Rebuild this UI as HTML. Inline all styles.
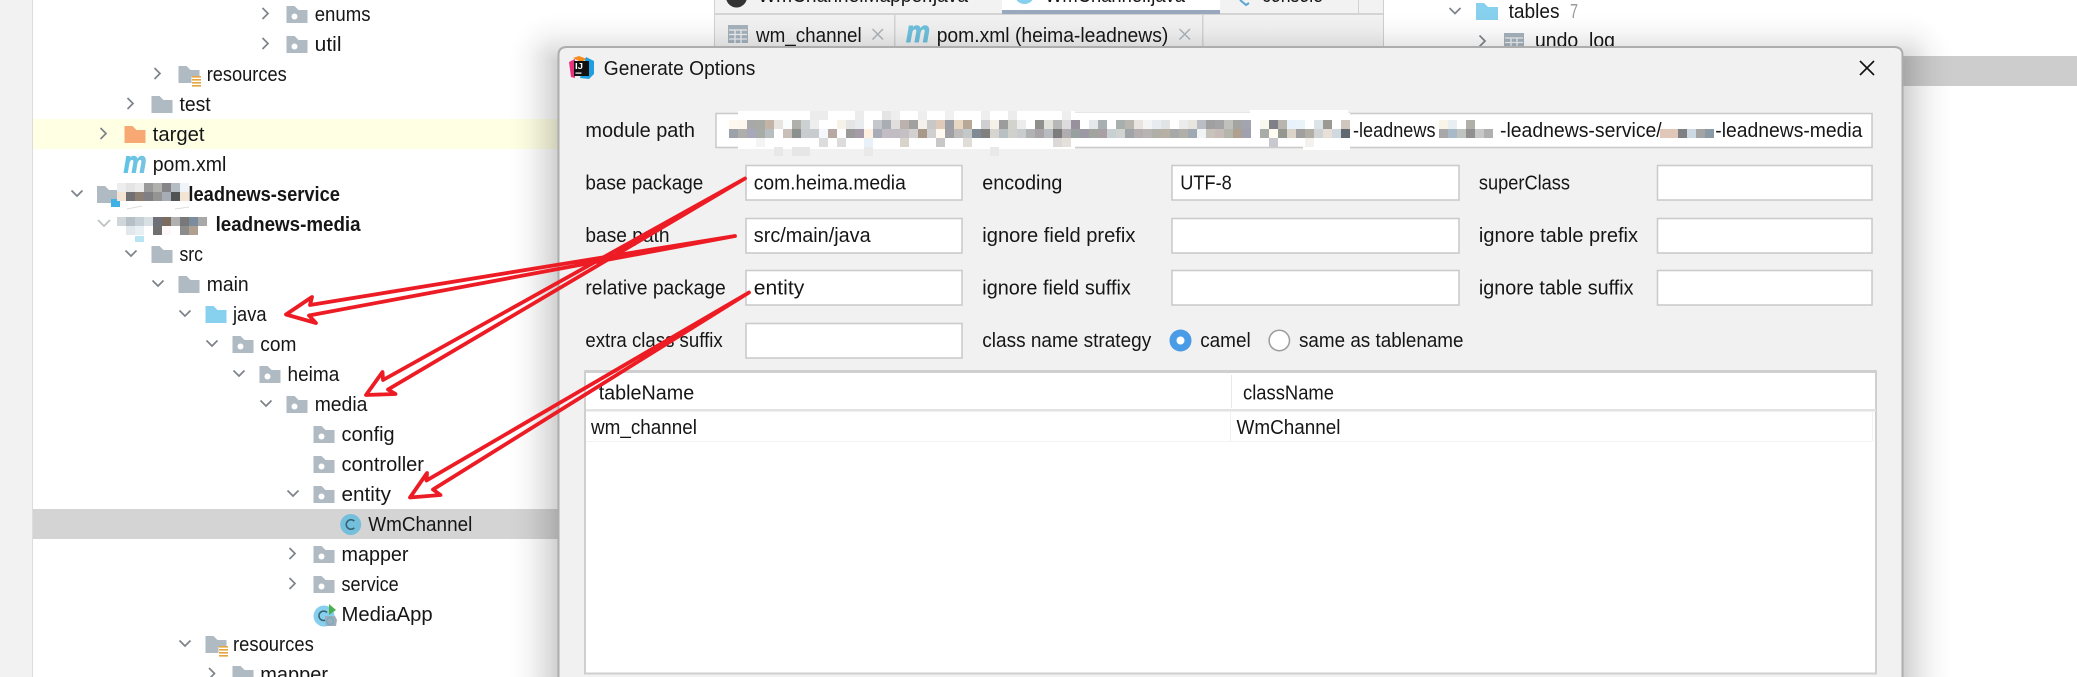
<!DOCTYPE html>
<html><head><meta charset="utf-8"><title>Generate Options</title>
<style>
html,body{margin:0;padding:0;background:#fff;width:2077px;height:677px;overflow:hidden}
svg{display:block}
text{font-family:"Liberation Sans",sans-serif;font-size:20px;fill:#161616}
.b{font-weight:bold}
.m rect{width:9px;height:9px}
.ch{fill:none;stroke:#7d8389;stroke-width:1.7}
.in{fill:#fff;stroke:#cbcbcb;stroke-width:1.6}
</style></head><body>
<svg xmlns="http://www.w3.org/2000/svg" width="2077" height="677" viewBox="0 0 2077 677">
<defs>
<path id="f" d="M0 0h8l4 4h9v13H0z" fill="#afbac2"/>
<g id="p"><path d="M0 0h8l4 4h9v13H0z" fill="#afbac2"/><circle cx="8" cy="10.500" r="3" fill="#fff"/></g>
<g id="r"><path d="M0 0h8l4 4h9v7h-8v6H0z" fill="#afbac2"/><path d="M13.500 10h9v1.600h-9zM13.500 13h9v1.600h-9zM13.500 16h9v1.600h-9zM13.500 19h9v1.600h-9z" fill="#e5a63f"/></g>
<path id="d" d="M-5.500-3L0 2.500L5.500-3" class="ch"/>
<path id="n" d="M-2.500-5.500L3 0L-2.500 5.500" class="ch"/>
<g id="t"><rect width="20" height="18" fill="#a6b3bd"/><path d="M1 5h18M1 9.500h18M1 14h18M7 5v13M13 5v13" stroke="#eef1f3" stroke-width="1.300" fill="none"/></g>
<linearGradient id="gr" x1="0" y1="0" x2="1" y2="0">
<stop offset="0" stop-color="#000" stop-opacity=".19"/><stop offset=".1" stop-color="#000" stop-opacity=".155"/><stop offset=".2" stop-color="#000" stop-opacity=".125"/><stop offset=".3" stop-color="#000" stop-opacity=".1"/><stop offset=".4" stop-color="#000" stop-opacity=".077"/><stop offset=".5" stop-color="#000" stop-opacity=".055"/><stop offset=".6" stop-color="#000" stop-opacity=".035"/><stop offset=".7" stop-color="#000" stop-opacity=".024"/><stop offset=".8" stop-color="#000" stop-opacity=".014"/><stop offset=".9" stop-color="#000" stop-opacity=".006"/><stop offset="1" stop-color="#000" stop-opacity="0"/>
</linearGradient>
<linearGradient id="gl" href="#gr" x1="1" y1="0" x2="0" y2="0"/>
<linearGradient id="gt" href="#gr" x1="0" y1="1" x2="0" y2="0"/>
<radialGradient id="c1" href="#gr" gradientUnits="userSpaceOnUse" cx="558" cy="62" r="50" fx="558" fy="62"/>
<radialGradient id="c2" href="#gr" gradientUnits="userSpaceOnUse" cx="1903" cy="62" r="50" fx="1903" fy="62"/>
<linearGradient id="mg" x1="0" y1="0" x2="1" y2="0"><stop offset="0" stop-color="#59c4e8"/><stop offset="1" stop-color="#7fc3dd"/></linearGradient>
</defs>

<!-- base -->
<rect width="2077" height="677" fill="#fff"/>
<rect width="32" height="677" fill="#f2f2f2"/><rect x="32" width="1" height="677" fill="#dcdcdc"/>
<rect x="33" y="119" width="540" height="30" fill="#ffffe4"/>
<rect x="33" y="509" width="540" height="30" fill="#d4d4d4"/>
<rect x="1890" y="56" width="187" height="30" fill="#cdcdcd"/>

<!-- tree -->
<use href="#n" x="265" y="13.500"/><use href="#p" x="286.500" y="6"/><text x="314.700" y="21" textLength="55.800" lengthAdjust="spacingAndGlyphs">enums</text>
<use href="#n" x="265" y="43.500"/><use href="#p" x="286.500" y="36"/><text x="314.700" y="51" textLength="26.800" lengthAdjust="spacingAndGlyphs">util</text>
<use href="#n" x="157" y="73.500"/><use href="#r" x="178.500" y="66"/><text x="206.700" y="81" textLength="80" lengthAdjust="spacingAndGlyphs">resources</text>
<use href="#n" x="130" y="103.500"/><use href="#f" x="151.500" y="96"/><text x="179.500" y="111" textLength="31.200" lengthAdjust="spacingAndGlyphs">test</text>
<use href="#n" x="103" y="133.500"/><path d="M124.500 126h8l4 4h9v13h-21z" fill="#f8a872"/><text x="152.700" y="141" textLength="51.800" lengthAdjust="spacingAndGlyphs">target</text>
<text x="123.500" y="172.500" textLength="23" lengthAdjust="spacingAndGlyphs" class="b" font-style="italic" style="font-size:31px;fill:url(#mg);stroke:#6cc3e4;stroke-width:.9">m</text><text x="152.700" y="171" textLength="73.600" lengthAdjust="spacingAndGlyphs">pom.xml</text>
<use href="#d" x="77" y="193.500"/><path d="M97 186h8l4 4h9v13H97z" fill="#afbac2"/><rect x="111" y="199" width="9" height="8" fill="#3eb2e4"/>
<text x="188.400" y="201" textLength="151.600" lengthAdjust="spacingAndGlyphs" class="b">leadnews-service</text>
<text x="215.600" y="231" textLength="145" lengthAdjust="spacingAndGlyphs" class="b">leadnews-media</text>
<use href="#d" x="131" y="253.500"/><use href="#f" x="151.500" y="246"/><text x="179.500" y="261" textLength="23.500" lengthAdjust="spacingAndGlyphs">src</text>
<use href="#d" x="158" y="283.500"/><use href="#f" x="178.500" y="276"/><text x="206.700" y="291" textLength="42" lengthAdjust="spacingAndGlyphs">main</text>
<use href="#d" x="185" y="313.500"/><path d="M205.500 306h8l4 4h9v13h-21z" fill="#87d0ee"/><text x="233" y="321" textLength="33.500" lengthAdjust="spacingAndGlyphs">java</text>
<use href="#d" x="212" y="343.500"/><use href="#p" x="232.500" y="336"/><text x="260.300" y="351" textLength="36.100" lengthAdjust="spacingAndGlyphs">com</text>
<use href="#d" x="239" y="373.500"/><use href="#p" x="259.500" y="366"/><text x="287.500" y="381" textLength="51.800" lengthAdjust="spacingAndGlyphs">heima</text>
<use href="#d" x="266" y="403.500"/><use href="#p" x="286.500" y="396"/><text x="314.700" y="411" textLength="52.700" lengthAdjust="spacingAndGlyphs">media</text>
<use href="#p" x="313.500" y="426"/><text x="341.500" y="441" textLength="53.100" lengthAdjust="spacingAndGlyphs">config</text>
<use href="#p" x="313.500" y="456"/><text x="341.500" y="471" textLength="82.500" lengthAdjust="spacingAndGlyphs">controller</text>
<use href="#d" x="293" y="493.500"/><use href="#p" x="313.500" y="486"/><text x="341.500" y="501" textLength="49.500" lengthAdjust="spacingAndGlyphs">entity</text>
<circle cx="350.700" cy="524.500" r="10.500" fill="#74bfdc"/><path d="M354.300 521.200a4.700 4.700 0 1 0 0 6.600" fill="none" stroke="#35606f" stroke-width="1.500"/><text x="368.300" y="531" textLength="104" lengthAdjust="spacingAndGlyphs">WmChannel</text>
<use href="#n" x="292" y="553.500"/><use href="#p" x="313.500" y="546"/><text x="341.500" y="561" textLength="67" lengthAdjust="spacingAndGlyphs">mapper</text>
<use href="#n" x="292" y="583.500"/><use href="#p" x="313.500" y="576"/><text x="341.500" y="591" textLength="57.200" lengthAdjust="spacingAndGlyphs">service</text>
<circle cx="324" cy="616" r="10.500" fill="#87cfee"/><path d="M327 612.500a4.700 4.700 0 1 0 0 6.600" fill="none" stroke="#35606f" stroke-width="1.500"/><path d="M329 604l7 6-7 5z" fill="#4cb050"/><path d="M325 616h10l2 4-1 6h-10l-1-6z" fill="#a0adb6"/><circle cx="330" cy="621" r="3.500" fill="none" stroke="#6aaed0" stroke-width="1.200"/>
<text x="341.500" y="621" textLength="91.100" lengthAdjust="spacingAndGlyphs">MediaApp</text>
<use href="#d" x="185" y="643.500"/><use href="#r" x="205.500" y="636"/><text x="233" y="651" textLength="80.800" lengthAdjust="spacingAndGlyphs">resources</text>
<use href="#n" x="211.500" y="673.500"/><use href="#f" x="232.500" y="666"/><text x="260.300" y="681" textLength="67.700" lengthAdjust="spacingAndGlyphs">mapper</text>

<!-- tree mosaics -->
<g class="m" shape-rendering="crispEdges">
<rect x="117" y="183" fill="#ededed"/><rect x="126" y="183" fill="#e4e4e4"/><rect x="135" y="183" fill="#ececec"/><rect x="144" y="183" fill="#9a9a9a"/><rect x="153" y="183" fill="#b0b0ae"/><rect x="162" y="183" fill="#858589"/><rect x="171" y="183" fill="#b4bcc4"/><rect x="180" y="183" fill="#f0f4f8"/>
<rect x="117" y="192" fill="#f4e4d4"/><rect x="126" y="192" fill="#707072"/><rect x="135" y="192" fill="#8c8074"/><rect x="144" y="192" fill="#808084"/><rect x="153" y="192" fill="#949492"/><rect x="162" y="192" fill="#a8acb4"/><rect x="171" y="192" fill="#505454"/><rect x="180" y="192" fill="#f4e4d4"/>
<rect x="117" y="217" fill="#d0d6da"/><rect x="126" y="217" fill="#b4c0c6"/><rect x="135" y="217" fill="#c4d0d6"/><rect x="144" y="217" fill="#d8e0e4"/><rect x="153" y="217" fill="#70707a"/><rect x="162" y="217" fill="#7c6c60"/><rect x="171" y="217" fill="#b0b0b0"/><rect x="180" y="217" fill="#787878"/><rect x="189" y="217" fill="#7a8c9e"/><rect x="198" y="217" fill="#a8a8a8"/>
<rect x="126" y="226" fill="#e0e8ec"/><rect x="135" y="226" fill="#e8f0f4"/><rect x="153" y="226" fill="#707070"/><rect x="162" y="226" fill="#fef8f8"/><rect x="180" y="226" fill="#8c8c8c"/><rect x="189" y="226" fill="#b0a090"/>
<rect x="135" y="236" style="height:6px" fill="#b8e4f4"/>
</g>
<path d="M98 220l6 6 6-6" class="ch" opacity=".5"/>
<path d="M127 209l15-3M175 209l14-2" stroke="#ddd" stroke-width="1" fill="none"/>

<!-- tab strip -->
<rect x="714" y="0" width="669" height="46" fill="#f2f2f2"/>
<rect x="714" y="0" width="1" height="46" fill="#d2d2d2"/>
<rect x="1383" y="0" width="1" height="46" fill="#cfcfcf"/>
<rect x="714" y="13" width="669" height="2" fill="#d4d4d4"/>
<rect x="1002" y="0" width="218" height="10" fill="#fff"/>
<rect x="1002" y="10" width="218" height="4" fill="#9aa8bd"/>
<rect x="1358" y="0" width="1" height="13" fill="#d2d2d2"/>
<circle cx="736.500" cy="-3" r="10.500" fill="#333"/>
<text x="758" y="2" textLength="210" lengthAdjust="spacingAndGlyphs">WmChannelMapper.java</text>
<circle cx="1024.500" cy="-6" r="10" fill="#87cfee"/>
<text x="1045" y="2" textLength="140" lengthAdjust="spacingAndGlyphs">WmChannel.java</text>
<path d="M1240 0l6 5 3-2" stroke="#5ba4d8" stroke-width="2" fill="none"/>
<text x="1262" y="2" textLength="61" lengthAdjust="spacingAndGlyphs">console</text>
<rect x="894" y="15" width="1.500" height="31" fill="#d4d4d4"/><rect x="1202" y="15" width="1.500" height="31" fill="#d4d4d4"/>
<use href="#t" x="728" y="25"/>
<text x="756" y="42" textLength="105.700" lengthAdjust="spacingAndGlyphs">wm_channel</text>
<path d="M872.500 29l10.500 10.500M883 29l-10.500 10.500" stroke="#adb4b9" stroke-width="1.500"/>
<text x="906" y="42" textLength="24" lengthAdjust="spacingAndGlyphs" class="b" font-style="italic" style="font-size:31px;fill:#6fc1de;stroke:#6fc1de;stroke-width:.9">m</text>
<text x="936.700" y="42" textLength="231.600" lengthAdjust="spacingAndGlyphs">pom.xml (heima-leadnews)</text>
<path d="M1179.500 29l10.500 10.500M1190 29l-10.500 10.500" stroke="#adb4b9" stroke-width="1.500"/>

<!-- right tree -->
<use href="#d" x="1455" y="11"/><path d="M1476 3h8l4 4h10v13h-22z" fill="#87d0ee"/>
<text x="1508.600" y="18" textLength="51" lengthAdjust="spacingAndGlyphs">tables</text>
<text x="1570" y="18" textLength="8" lengthAdjust="spacingAndGlyphs" style="fill:#9a9a9a">7</text>
<use href="#n" x="1482" y="41"/><use href="#t" x="1504" y="33"/>
<text x="1535" y="47" textLength="80" lengthAdjust="spacingAndGlyphs">undo_log</text>

<!-- shadow -->
<rect x="508" y="62" width="50" height="615" fill="url(#gl)"/>
<rect x="1903" y="62" width="50" height="615" fill="url(#gr)"/>
<rect x="558" y="12" width="1345" height="50" fill="url(#gt)"/>
<rect x="508" y="12" width="50" height="50" fill="url(#c1)"/>
<rect x="1903" y="12" width="50" height="50" fill="url(#c2)"/>

<!-- dialog -->
<path d="M558.500 680V55Q558.500 47 567 47H1894Q1902.500 47 1902.500 55V680Z" fill="#f1f1f1" stroke="#adadad" stroke-width="2"/>
<!-- IJ logo -->
<path d="M569 62l6-3v19l-4-1z" fill="#e8327c"/><path d="M573 58l6-2 8 3-6 3z" fill="#f68b1f"/><path d="M586 57l8 4v13l-5 5-9-1z" fill="#1d9fe0"/>
<rect x="574" y="61" width="15" height="15" fill="#111"/>
<text x="575" y="69" textLength="8" lengthAdjust="spacingAndGlyphs" class="b" style="font-size:8px;fill:#fff">IJ</text>
<rect x="575.500" y="72.500" width="6" height="1.200" fill="#fff"/>
<text x="603.800" y="75" textLength="151.500" lengthAdjust="spacingAndGlyphs">Generate Options</text>
<path d="M1860 61l14 14M1874 61l-14 14" stroke="#111" stroke-width="1.600"/>

<!-- labels -->
<text x="585.400" y="137" textLength="109.600" lengthAdjust="spacingAndGlyphs">module path</text>
<text x="585.400" y="189.500" textLength="117.900" lengthAdjust="spacingAndGlyphs">base package</text>
<text x="585.400" y="242" textLength="84.200" lengthAdjust="spacingAndGlyphs">base path</text>
<text x="585.400" y="294.500" textLength="140.300" lengthAdjust="spacingAndGlyphs">relative package</text>
<text x="585.400" y="347" textLength="137.300" lengthAdjust="spacingAndGlyphs">extra class suffix</text>
<text x="982.300" y="189.500" textLength="80.100" lengthAdjust="spacingAndGlyphs">encoding</text>
<text x="982.300" y="242" textLength="153.100" lengthAdjust="spacingAndGlyphs">ignore field prefix</text>
<text x="982.300" y="294.500" textLength="148.500" lengthAdjust="spacingAndGlyphs">ignore field suffix</text>
<text x="982.300" y="347" textLength="168.900" lengthAdjust="spacingAndGlyphs">class name strategy</text>
<text x="1478.900" y="189.500" textLength="91.100" lengthAdjust="spacingAndGlyphs">superClass</text>
<text x="1478.900" y="242" textLength="159.100" lengthAdjust="spacingAndGlyphs">ignore table prefix</text>
<text x="1478.900" y="294.500" textLength="154.600" lengthAdjust="spacingAndGlyphs">ignore table suffix</text>

<!-- inputs -->
<rect class="in" x="716" y="113.500" width="1156" height="34"/>
<rect class="in" x="746" y="165.500" width="216" height="34.500"/>
<rect class="in" x="746" y="218.500" width="216" height="34.500"/>
<rect class="in" x="746" y="270.500" width="216" height="34.500"/>
<rect class="in" x="746" y="323.500" width="216" height="34.500"/>
<rect class="in" x="1172" y="165.500" width="287" height="34.500"/>
<rect class="in" x="1172" y="218.500" width="287" height="34.500"/>
<rect class="in" x="1172" y="270.500" width="287" height="34.500"/>
<rect class="in" x="1657.500" y="165.500" width="214.500" height="34.500"/>
<rect class="in" x="1657.500" y="218.500" width="214.500" height="34.500"/>
<rect class="in" x="1657.500" y="270.500" width="214.500" height="34.500"/>
<text x="753.800" y="189.500" textLength="152" lengthAdjust="spacingAndGlyphs">com.heima.media</text>
<text x="753.800" y="242" textLength="116.800" lengthAdjust="spacingAndGlyphs">src/main/java</text>
<text x="753.800" y="294.500" textLength="50.500" lengthAdjust="spacingAndGlyphs">entity</text>
<text x="1180.300" y="189.500" textLength="51.500" lengthAdjust="spacingAndGlyphs">UTF-8</text>

<!-- radios -->
<circle cx="1180.500" cy="340.500" r="11" fill="#4a9ce6"/><circle cx="1180.500" cy="340.500" r="4" fill="#fff"/>
<text x="1200.200" y="347" textLength="50.500" lengthAdjust="spacingAndGlyphs">camel</text>
<circle cx="1279.300" cy="340.500" r="10.200" fill="#fff" stroke="#9c9c9c" stroke-width="1.500"/>
<text x="1299" y="347" textLength="164.500" lengthAdjust="spacingAndGlyphs">same as tablename</text>

<!-- module path text -->
<text x="1353" y="137" textLength="82.500" lengthAdjust="spacingAndGlyphs">-leadnews</text>
<text x="1500" y="137" textLength="161.700" lengthAdjust="spacingAndGlyphs">-leadnews-service/</text>
<text x="1715.300" y="137" textLength="147.100" lengthAdjust="spacingAndGlyphs">-leadnews-media</text>

<!-- mosaic haze -->
<rect x="738" y="111" width="337" height="38" fill="#fff"/>
<rect x="1075" y="113" width="275" height="26" fill="#fff"/>
<rect x="1250" y="110" width="98" height="5" fill="#fff"/>
<rect x="1303" y="139" width="47" height="11" fill="#fff"/>
<g class="m" shape-rendering="crispEdges">
<rect x="810" y="111" fill="#ececec"/><rect x="819" y="111" fill="#ececec"/><rect x="855" y="111" fill="#ececec"/><rect x="882" y="111" fill="#e4e4e4"/><rect x="891" y="111" fill="#eeeeee"/><rect x="918" y="111" fill="#eeeeee"/><rect x="945" y="111" fill="#f0f0f0"/><rect x="981" y="111" fill="#eeeeee"/><rect x="1008" y="111" fill="#ececec"/><rect x="1062" y="111" fill="#eeeeee"/>
<rect x="729" y="120" fill="#fff8f0"/><rect x="738" y="120" fill="#fdf6ee"/><rect x="747" y="120" fill="#a8a8a8"/><rect x="756" y="120" fill="#a9a9a6"/><rect x="765" y="120" fill="#c2b5a8"/><rect x="774" y="120" fill="#e8e4df"/><rect x="783" y="120" fill="#fbfdfd"/><rect x="792" y="120" fill="#b0b0aa"/><rect x="801" y="120" fill="#ccd2d4"/><rect x="810" y="120" fill="#eee"/><rect x="837" y="120" fill="#f5f2ea"/><rect x="846" y="120" fill="#e4e6e6"/><rect x="855" y="120" fill="#e8ecef"/><rect x="873" y="120" fill="#c6c7cc"/><rect x="882" y="120" fill="#a9aeb2"/><rect x="891" y="120" fill="#e0dfdd"/><rect x="900" y="120" fill="#bcb2ad"/><rect x="909" y="120" fill="#a0a0a0"/><rect x="918" y="120" fill="#f4f0ec"/><rect x="927" y="120" fill="#c8c8c8"/><rect x="936" y="120" fill="#dfc9b8"/><rect x="945" y="120" fill="#9c9ea6"/><rect x="954" y="120" fill="#e6d6c2"/><rect x="963" y="120" fill="#b8a898"/><rect x="981" y="120" fill="#cfcfd2"/><rect x="990" y="120" fill="#f6f1e8"/><rect x="999" y="120" fill="#9d9c9c"/><rect x="1008" y="120" fill="#d3d3ce"/><rect x="1017" y="120" fill="#ececec"/><rect x="1035" y="120" fill="#8f8f8c"/><rect x="1044" y="120" fill="#e2e2dd"/><rect x="1053" y="120" fill="#b6b8b8"/><rect x="1062" y="120" fill="#dcdcdc"/><rect x="1071" y="120" fill="#99909e"/><rect x="1089" y="120" fill="#e4e8ea"/><rect x="1098" y="120" fill="#a9b0b2"/><rect x="1116" y="120" fill="#a8b0ae"/><rect x="1125" y="120" fill="#b8b6ae"/><rect x="1134" y="120" fill="#eae4e0"/><rect x="1143" y="120" fill="#f4f4f4"/><rect x="1152" y="120" fill="#e8ecf0"/><rect x="1161" y="120" fill="#e0e4e6"/><rect x="1179" y="120" fill="#ececec"/><rect x="1188" y="120" fill="#e8e4de"/><rect x="1197" y="120" fill="#bcbcc4"/><rect x="1206" y="120" fill="#a0a0a0"/><rect x="1215" y="120" fill="#a4a4a6"/><rect x="1224" y="120" fill="#c0c0bc"/><rect x="1233" y="120" fill="#a4a4a0"/><rect x="1242" y="120" fill="#a4a4b0"/><rect x="1260" y="120" fill="#f8f8ee"/><rect x="1269" y="120" fill="#7f8088"/><rect x="1278" y="120" fill="#b8b4ae"/><rect x="1287" y="120" fill="#e8f2fa"/><rect x="1296" y="120" fill="#eaf2fa"/><rect x="1314" y="120" fill="#dde4e8"/><rect x="1323" y="120" fill="#9a9a92"/><rect x="1341" y="120" fill="#cfc6be"/>
<rect x="729" y="129" fill="#9da2aa"/><rect x="738" y="129" fill="#aeafab"/><rect x="747" y="129" fill="#a8a8ba"/><rect x="756" y="129" fill="#a8aca6"/><rect x="765" y="129" fill="#b8bec0"/><rect x="783" y="129" fill="#c8c0b8"/><rect x="792" y="129" fill="#8c908e"/><rect x="801" y="129" fill="#c8cccf"/><rect x="810" y="129" fill="#c8cccf"/><rect x="819" y="129" fill="#f4f8fc"/><rect x="828" y="129" fill="#b8a8a2"/><rect x="846" y="129" fill="#9a9a98"/><rect x="855" y="129" fill="#a49aa8"/><rect x="864" y="129" fill="#fff0e0"/><rect x="873" y="129" fill="#a8acb8"/><rect x="882" y="129" fill="#c4bcc4"/><rect x="891" y="129" fill="#c0bcc4"/><rect x="900" y="129" fill="#c4c0c4"/><rect x="909" y="129" fill="#d4d0d0"/><rect x="918" y="129" fill="#a8988a"/><rect x="927" y="129" fill="#d0d0d0"/><rect x="936" y="129" fill="#fff9f2"/><rect x="945" y="129" fill="#a0a0a4"/><rect x="954" y="129" fill="#c0bcbc"/><rect x="963" y="129" fill="#c4c8c8"/><rect x="972" y="129" fill="#808a94"/><rect x="981" y="129" fill="#80807e"/><rect x="990" y="129" fill="#d8d4d0"/><rect x="999" y="129" fill="#b8c0c4"/><rect x="1008" y="129" fill="#d0d0cc"/><rect x="1017" y="129" fill="#c8ccce"/><rect x="1026" y="129" fill="#b0b2b4"/><rect x="1035" y="129" fill="#a8a4a8"/><rect x="1044" y="129" fill="#b8bcc0"/><rect x="1053" y="129" fill="#7c7c7c"/><rect x="1062" y="129" fill="#b0acb0"/><rect x="1071" y="129" fill="#98a0a0"/><rect x="1080" y="129" fill="#9c98a4"/><rect x="1089" y="129" fill="#a0a49c"/><rect x="1098" y="129" fill="#a8a0a4"/><rect x="1107" y="129" fill="#c8d0d4"/><rect x="1116" y="129" fill="#d0d4d0"/><rect x="1125" y="129" fill="#a0a4a8"/><rect x="1134" y="129" fill="#b4aeb0"/><rect x="1143" y="129" fill="#b8b4b4"/><rect x="1152" y="129" fill="#b0b0a8"/><rect x="1161" y="129" fill="#b8b0a4"/><rect x="1170" y="129" fill="#a8a8a8"/><rect x="1179" y="129" fill="#b0b0a8"/><rect x="1188" y="129" fill="#a0a8b4"/><rect x="1197" y="129" fill="#f0f4f4"/><rect x="1206" y="129" fill="#c8c4bc"/><rect x="1215" y="129" fill="#c8bcb8"/><rect x="1224" y="129" fill="#b4b6ac"/><rect x="1233" y="129" fill="#b0a090"/><rect x="1242" y="129" fill="#a0a0b0"/><rect x="1260" y="129" fill="#a8aca8"/><rect x="1269" y="129" fill="#fffaf2"/><rect x="1278" y="129" fill="#949890"/><rect x="1287" y="129" fill="#dcd4c8"/><rect x="1296" y="129" fill="#a0a0a0"/><rect x="1305" y="129" fill="#b0aea4"/><rect x="1314" y="129" fill="#d0d4d4"/><rect x="1323" y="129" fill="#e8e0d8"/><rect x="1332" y="129" fill="#d0d8e0"/><rect x="1341" y="129" fill="#606870"/>
<rect x="819" y="138" fill="#dcdcdc"/><rect x="837" y="138" fill="#dcdcdc"/><rect x="864" y="138" fill="#e8f0f8"/><rect x="900" y="138" fill="#d8d4cc"/><rect x="936" y="138" fill="#c8c8c8"/><rect x="963" y="138" fill="#e0dcd8"/><rect x="1053" y="138" fill="#dcd8d8"/><rect x="1062" y="138" fill="#e4e0da"/><rect x="756" y="138" fill="#f4f4f4"/><rect x="1269" y="138" fill="#c8c8ce"/><rect x="1305" y="138" fill="#f4f2ee"/>
<rect x="774" y="147" fill="#e8e8e8"/><rect x="792" y="147" fill="#e6e6e6"/><rect x="801" y="147" fill="#e6e6e6"/><rect x="864" y="147" fill="#e9e9e9"/><rect x="990" y="147" fill="#e9e9e9"/>
<rect x="1439" y="129" fill="#a8a8a8"/><rect x="1448" y="129" fill="#a8bac8"/><rect x="1457" y="129" fill="#c0c4c0"/><rect x="1466" y="129" fill="#909090"/><rect x="1475" y="129" fill="#c8c8c8"/><rect x="1484" y="129" fill="#b0b0b0"/>
<rect x="1439" y="120" fill="#f8f4e8"/><rect x="1448" y="120" fill="#e8eef2"/><rect x="1466" y="120" fill="#b0b0a8"/>
<rect x="1660" y="129" fill="#e0c8b8"/><rect x="1669" y="129" fill="#e0c8b8"/><rect x="1678" y="129" fill="#7e8084"/><rect x="1687" y="129" fill="#ccd8e2"/><rect x="1696" y="129" fill="#a4a4a4"/><rect x="1705" y="129" fill="#8a9aa6"/>
</g>

<!-- table -->
<rect x="585" y="371.500" width="1291" height="302" fill="#fff" stroke="#cfcfcf" stroke-width="2"/>
<rect x="585" y="370" width="1291.500" height="3" fill="#cfcfcf"/>
<rect x="586" y="409" width="1290" height="2.500" fill="#e2e2e2"/>
<rect x="586" y="441" width="1286" height="1" fill="#f2f2f2"/>
<rect x="1231" y="375" width="1" height="33" fill="#e8e8e8"/>
<rect x="1230" y="411" width="1" height="30" fill="#f0f0f0"/>
<rect x="1872" y="411" width="1" height="30" fill="#f2f2f2"/>
<text x="598.700" y="399.500" textLength="95.500" lengthAdjust="spacingAndGlyphs">tableName</text>
<text x="1243" y="399.500" textLength="91" lengthAdjust="spacingAndGlyphs">className</text>
<text x="591" y="434" textLength="106" lengthAdjust="spacingAndGlyphs">wm_channel</text>
<text x="1236.500" y="434" textLength="104" lengthAdjust="spacingAndGlyphs">WmChannel</text>

<!-- arrows -->
<g fill="none" stroke="#ed1c24" stroke-width="3.800" stroke-linejoin="round" stroke-linecap="round">
<path d="M735 236L310 305L312 297L286 314.500L316 323L309 315.500L735 236Z"/>
<path d="M745 178.500L383 380L382.500 372L366 395L395.500 394L388 389.500L745 178.500Z"/>
<path d="M749 292.500L426.500 480.500L427 473L410 497.500L440.500 495L433 489.500L749 292.500Z"/>
</g>
</svg>
</body></html>
